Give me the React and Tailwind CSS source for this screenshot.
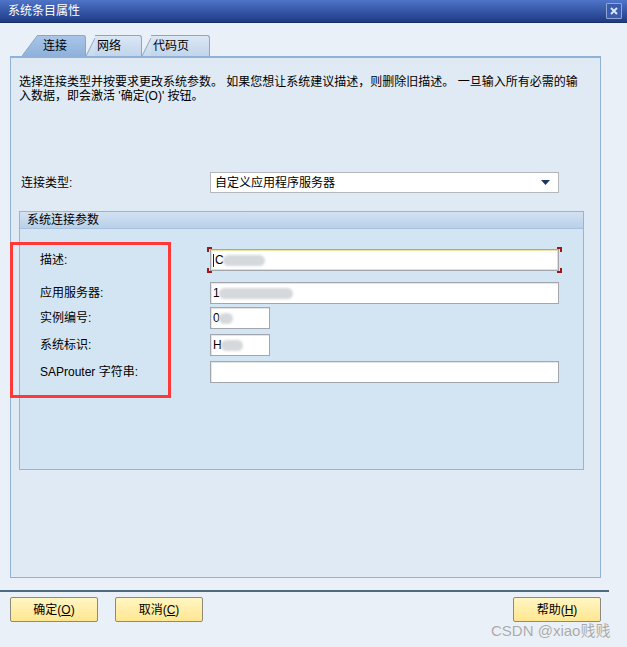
import React from "react";

const font = { fontFamily: '"Liberation Sans", "Noto Sans CJK SC", sans-serif' };

function Tab({ label, active, first }) {
  const fill = active ? "#8fb1da" : "#c9daee";
  const top = active ? "#a9c5e8" : "#dbe7f4";
  return (
    <div className="flex h-[21px] items-stretch">
      <svg width={first ? 15 : 9} height="21" className="shrink-0">
        <defs>
          <linearGradient id={"g" + label} x1="0" y1="0" x2="0" y2="1">
            <stop offset="0" stopColor={top} />
            <stop offset="1" stopColor={fill} />
          </linearGradient>
        </defs>
        <polygon points={first ? "0,21 15,1 15,21" : "0,21 9,3 9,21"} fill={`url(#g${label})`} />
        <line x1="0" y1="21" x2={first ? 15 : 9} y2={first ? 1 : 3} stroke="#8aa6c9" strokeWidth="1" />
      </svg>
      <div
        className={`flex items-center border-t border-r border-[#8aa6c9] rounded-tr-[3px] text-[12px] text-black ${
          active ? "bg-gradient-to-b from-[#a9c5e8] to-[#8fb1da] pl-[6px] w-[49px]" : "bg-gradient-to-b from-[#dbe7f4] to-[#c2d5eb] pl-[2px]"
        } ${label === "网络" ? "w-[47px]" : ""} ${label === "代码页" ? "w-[59px]" : ""}`}
      >
        {label}
      </div>
    </div>
  );
}

function Field({ w, focused, first, blob, children }) {
  return (
    <div
      className={`relative h-full ${w} bg-white border border-[#a3a7ad] flex items-center pl-[2px] text-[12px] text-black ${
        focused ? "shadow-[inset_0_0_0_1px_#efe1a4]" : "shadow-[inset_1px_1px_0_#e6e6e6]"
      }`}
    >
      {focused && <span className="w-px h-[13px] bg-[#102060] mr-[1px]" />}
      {first && <span className="leading-none">{first}</span>}
      {blob && <span className={`${blob} h-[11px] rounded-full bg-[#d6d9dc] blur-[1px] -ml-[1px]`} />}
      {children}
    </div>
  );
}

function Corner({ pos }) {
  return <span className={`absolute w-[5px] h-[5px] border-[#a11515] ${pos}`} />;
}

function Row({ label, mt, children }) {
  return (
    <div className={`flex items-center h-[22px] ${mt}`}>
      <div className="w-[190px] pl-[20px] text-[12px] text-black">{label}</div>
      {children}
    </div>
  );
}

function Btn({ text, k }) {
  return (
    <button className="w-[88px] h-[25px] rounded-[2px] border border-[#8c8a7c] bg-gradient-to-b from-[#fff6c2] to-[#ffe690] text-[12px] text-black flex items-center justify-center">
      {text}(<span className="underline">{k}</span>)
    </button>
  );
}

export default function App() {
  return (
    <div style={font} className="relative w-[627px] h-[647px] bg-[#e9f0f7] flex flex-col overflow-hidden">
      <div className="h-[23px] bg-gradient-to-b from-[#4f74c8] to-[#1f3b85] flex items-center justify-between pl-[8px] pr-[5px] border-b border-[#1a2f66]">
        <span className="text-white text-[12px]">系统条目属性</span>
        <div className="w-[16px] h-[16px] border border-[#8fa6d6] bg-[#3a5cab] rounded-[1px] flex items-center justify-center">
          <svg width="10" height="10" viewBox="0 0 10 10">
            <path d="M2 2 L8 8 M8 2 L2 8" stroke="#d8e4fb" strokeWidth="2" />
          </svg>
        </div>
      </div>

      <div className="flex mt-[12px] pl-[22px]">
        <Tab label="连接" active first />
        <Tab label="网络" />
        <Tab label="代码页" />
      </div>

      <div className="ml-[10px] w-[591px] h-[522px] border border-t-2 border-[#8fb2d6] bg-[#dfeaf4] flex flex-col">
        <p className="pt-[17px] px-[8px] text-[12px] leading-[14px] text-black w-[585px]">
          选择连接类型并按要求更改系统参数。 如果您想让系统建议描述，则删除旧描述。 一旦输入所有必需的输入数据，即会激活 '确定(O)' 按钮。
        </p>

        <div className="flex items-center mt-[69px] h-[21px]">
          <div className="w-[199px] pl-[10px] text-[12px] text-black">连接类型:</div>
          <div className="relative w-[349px] h-[21px] bg-white border border-[#b4b8bd] flex items-center pl-[4px] text-[12px] text-black">
            自定义应用程序服务器
            <svg width="9" height="5" className="absolute right-[8px] top-[7px]">
              <polygon points="0,0 9,0 4.5,5" fill="#1d3566" />
            </svg>
          </div>
        </div>

        <div className="ml-[8px] mt-[18px] w-[565px] h-[259px] border border-[#93b5d8] bg-[#d3e4f2] flex flex-col">
          <div className="h-[17px] bg-gradient-to-b from-[#d3e2f2] to-[#b9d0e8] border-b border-[#a6c0dd] pl-[7px] text-[12px] leading-[16px] text-black">
            系统连接参数
          </div>

          <Row label="描述:" mt="mt-[20px]">
            <div className="relative h-full">
              <Field w="w-[349px]" focused first="C" blob="w-[42px]" />
              <Corner pos="-left-[3px] -top-[2px] border-l-2 border-t-2" />
              <Corner pos="-right-[3px] -top-[2px] border-r-2 border-t-2" />
              <Corner pos="-left-[3px] -bottom-[2px] border-l-2 border-b-2" />
              <Corner pos="-right-[3px] -bottom-[2px] border-r-2 border-b-2" />
            </div>
          </Row>
          <Row label="应用服务器:" mt="mt-[11px]">
            <Field w="w-[349px]" first="1" blob="w-[74px]" />
          </Row>
          <Row label="实例编号:" mt="mt-[3px]">
            <Field w="w-[60px]" first="0" blob="w-[14px]" />
          </Row>
          <Row label="系统标识:" mt="mt-[5px]">
            <Field w="w-[60px]" first="H" blob="w-[22px]" />
          </Row>
          <Row label="SAProuter 字符串:" mt="mt-[5px]">
            <Field w="w-[349px]" />
          </Row>
        </div>
      </div>

      <div className="mt-[12px] w-[609px] h-[2px] bg-[#4e6a7e]" />

      <div className="flex items-center mt-[5px] px-[10px] w-[611px]">
        <Btn text="确定" k="O" />
        <div className="w-[17px]" />
        <Btn text="取消" k="C" />
        <div className="flex-1" />
        <Btn text="帮助" k="H" />
      </div>

      <div className="absolute left-[10px] top-[242px] w-[161px] h-[156px] border-[3px] border-[#ff3838]" />

      <div className="absolute left-[491px] top-[620px] text-[15px] text-[#a9a9a9] [text-shadow:0_0_1px_#fff]">
        CSDN @xiao贱贱
      </div>
    </div>
  );
}
